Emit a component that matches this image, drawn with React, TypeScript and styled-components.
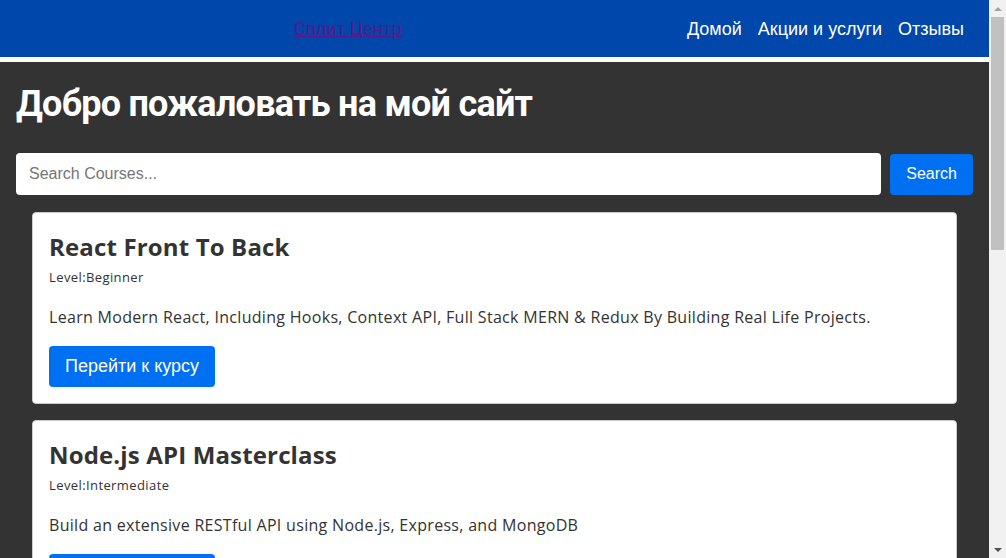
import React from "react";
import styled, { createGlobalStyle, css } from "styled-components";

const GlobalStyle = createGlobalStyle`
  html, body {
    margin: 0;
    padding: 0;
    background: #333333;
    overflow: hidden;
  }
  * { box-sizing: border-box; }
`;

const Shell = styled.div`
  display: flex;
  height: 100vh;
  width: 100vw;
`;

const Page = styled.div`
  flex: 1;
  min-width: 0;
  overflow-y: auto;
  scrollbar-width: none;
  background: #333333;
  &::-webkit-scrollbar { display: none; }
`;

const ScrollRail = styled.div`
  display: flex;
  flex-direction: column;
  flex: 0 0 17px;
  width: 17px;
  background: #f1f1f1;
`;

const RailButton = styled.div`
  display: flex;
  align-items: center;
  justify-content: center;
  height: 17px;
  flex: 0 0 17px;
`;

const Arrow = styled.span<{ $dir: "up" | "down" }>`
  width: 0;
  height: 0;
  border-left: 4px solid transparent;
  border-right: 4px solid transparent;
  ${(p) =>
    p.$dir === "up"
      ? css`border-bottom: 4px solid #a3a3a3;`
      : css`border-top: 4px solid #505050;`}
`;

const RailTrack = styled.div`
  flex: 1;
  padding: 0 2px;
`;

const RailThumb = styled.div`
  height: 233px;
  background: #c1c1c1;
`;

const Header = styled.header`
  display: flex;
  align-items: center;
  justify-content: space-between;
  height: 62px;
  padding: 0 25px 0 294px;
  background: #0047ab;
  border-bottom: 5px solid #ffffff;
  font-family: "Liberation Sans", Arial, sans-serif;
`;

const Logo = styled.a`
  font-family: Roboto, "Liberation Sans", sans-serif;
  font-size: 18px;
  color: #551a8b;
  text-decoration: underline;
  line-height: 22px;
`;

const Nav = styled.nav`
  display: flex;
  gap: 16px;
`;

const NavLink = styled.a`
  font-size: 18px;
  color: #ffffff;
  text-decoration: none;
  line-height: 22px;
`;

const Main = styled.main`
  padding: 22px 16px 16px;
  background: #333333;
`;

const Title = styled.h1`
  margin: 0 0 28px;
  font-family: Roboto, "Liberation Sans", Arial, sans-serif;
  font-size: 36px;
  font-weight: 700;
  line-height: 41px;
  letter-spacing: -0.75px;
  color: #ffffff;
`;

const SearchRow = styled.form`
  display: flex;
  align-items: center;
  gap: 9px;
  margin-bottom: 17px;
`;

const SearchInput = styled.input`
  flex: 1;
  height: 42px;
  border: none;
  border-radius: 4px;
  padding: 0 13px;
  font-family: "Liberation Sans", Arial, sans-serif;
  font-size: 16px;
  color: #333;
  background: #fff;
  outline: none;
  &::placeholder { color: #757575; }
`;

const SearchButton = styled.button`
  height: 41px;
  padding: 0 16px;
  border: none;
  border-radius: 4px;
  background: #0070f3;
  color: #ffffff;
  font-family: "Liberation Sans", Arial, sans-serif;
  font-size: 16px;
  cursor: pointer;
`;

const CardList = styled.div`
  display: flex;
  flex-direction: column;
  gap: 16px;
  margin: 0 16px;
`;

const Card = styled.article`
  background: #ffffff;
  border: 1px solid #cccccc;
  border-radius: 4px;
  padding: 16px;
  color: #333333;
  font-family: "Open Sans", "Noto Sans", sans-serif;
`;

const CardTitle = styled.h2`
  margin: 0;
  font-size: 24px;
  font-weight: 700;
  line-height: 36px;
  letter-spacing: 0.15px;
  color: #333333;
`;

const Level = styled.p`
  margin: 3px 0 0;
  font-size: 13px;
  line-height: 18px;
  letter-spacing: 0.4px;
`;

const Description = styled.p`
  margin: 19px 0 0;
  font-size: 16px;
  line-height: 24px;
  letter-spacing: 0.3px;
`;

const CourseButton = styled.a`
  display: inline-flex;
  align-items: center;
  height: 41px;
  margin-top: 17px;
  padding: 0 16px;
  border-radius: 4px;
  background: #0070f3;
  color: #ffffff;
  font-family: "Liberation Sans", Arial, sans-serif;
  font-size: 18px;
  text-decoration: none;
`;

const courses = [
  {
    title: "React Front To Back",
    level: "Beginner",
    description:
      "Learn Modern React, Including Hooks, Context API, Full Stack MERN & Redux By Building Real Life Projects.",
  },
  {
    title: "Node.js API Masterclass",
    level: "Intermediate",
    description: "Build an extensive RESTful API using Node.js, Express, and MongoDB",
  },
  {
    title: "Modern JavaScript From The Beginning",
    level: "Beginner",
    description: "37 hour course that teaches you all of the fundamentals of modern JavaScript.",
  },
  {
    title: "Next.js Dev To Deployment",
    level: "Intermediate",
    description: "Learn Next.js by building a music event website and a web dev blog as a static website",
  },
  {
    title: "50 Projects in 50 Days",
    level: "Beginner",
    description: "Sharpen your skills by building 50 quick, unique & fun mini projects.",
  },
];

export default function App() {
  return (
    <>
      <GlobalStyle />
      <Shell>
        <Page>
          <Header>
            <Logo href="#">Сплит Центр</Logo>
            <Nav>
              <NavLink href="#">Домой</NavLink>
              <NavLink href="#">Акции и услуги</NavLink>
              <NavLink href="#">Отзывы</NavLink>
            </Nav>
          </Header>
          <Main>
            <Title>Добро пожаловать на мой сайт</Title>
            <SearchRow onSubmit={(e) => e.preventDefault()}>
              <SearchInput placeholder="Search Courses..." />
              <SearchButton type="submit">Search</SearchButton>
            </SearchRow>
            <CardList>
              {courses.map((c) => (
                <Card key={c.title}>
                  <CardTitle>{c.title}</CardTitle>
                  <Level>Level:{c.level}</Level>
                  <Description>{c.description}</Description>
                  <CourseButton href="#">Перейти к курсу</CourseButton>
                </Card>
              ))}
            </CardList>
          </Main>
        </Page>
        <ScrollRail aria-hidden="true">
          <RailButton>
            <Arrow $dir="up" />
          </RailButton>
          <RailTrack>
            <RailThumb />
          </RailTrack>
          <RailButton>
            <Arrow $dir="down" />
          </RailButton>
        </ScrollRail>
      </Shell>
    </>
  );
}
